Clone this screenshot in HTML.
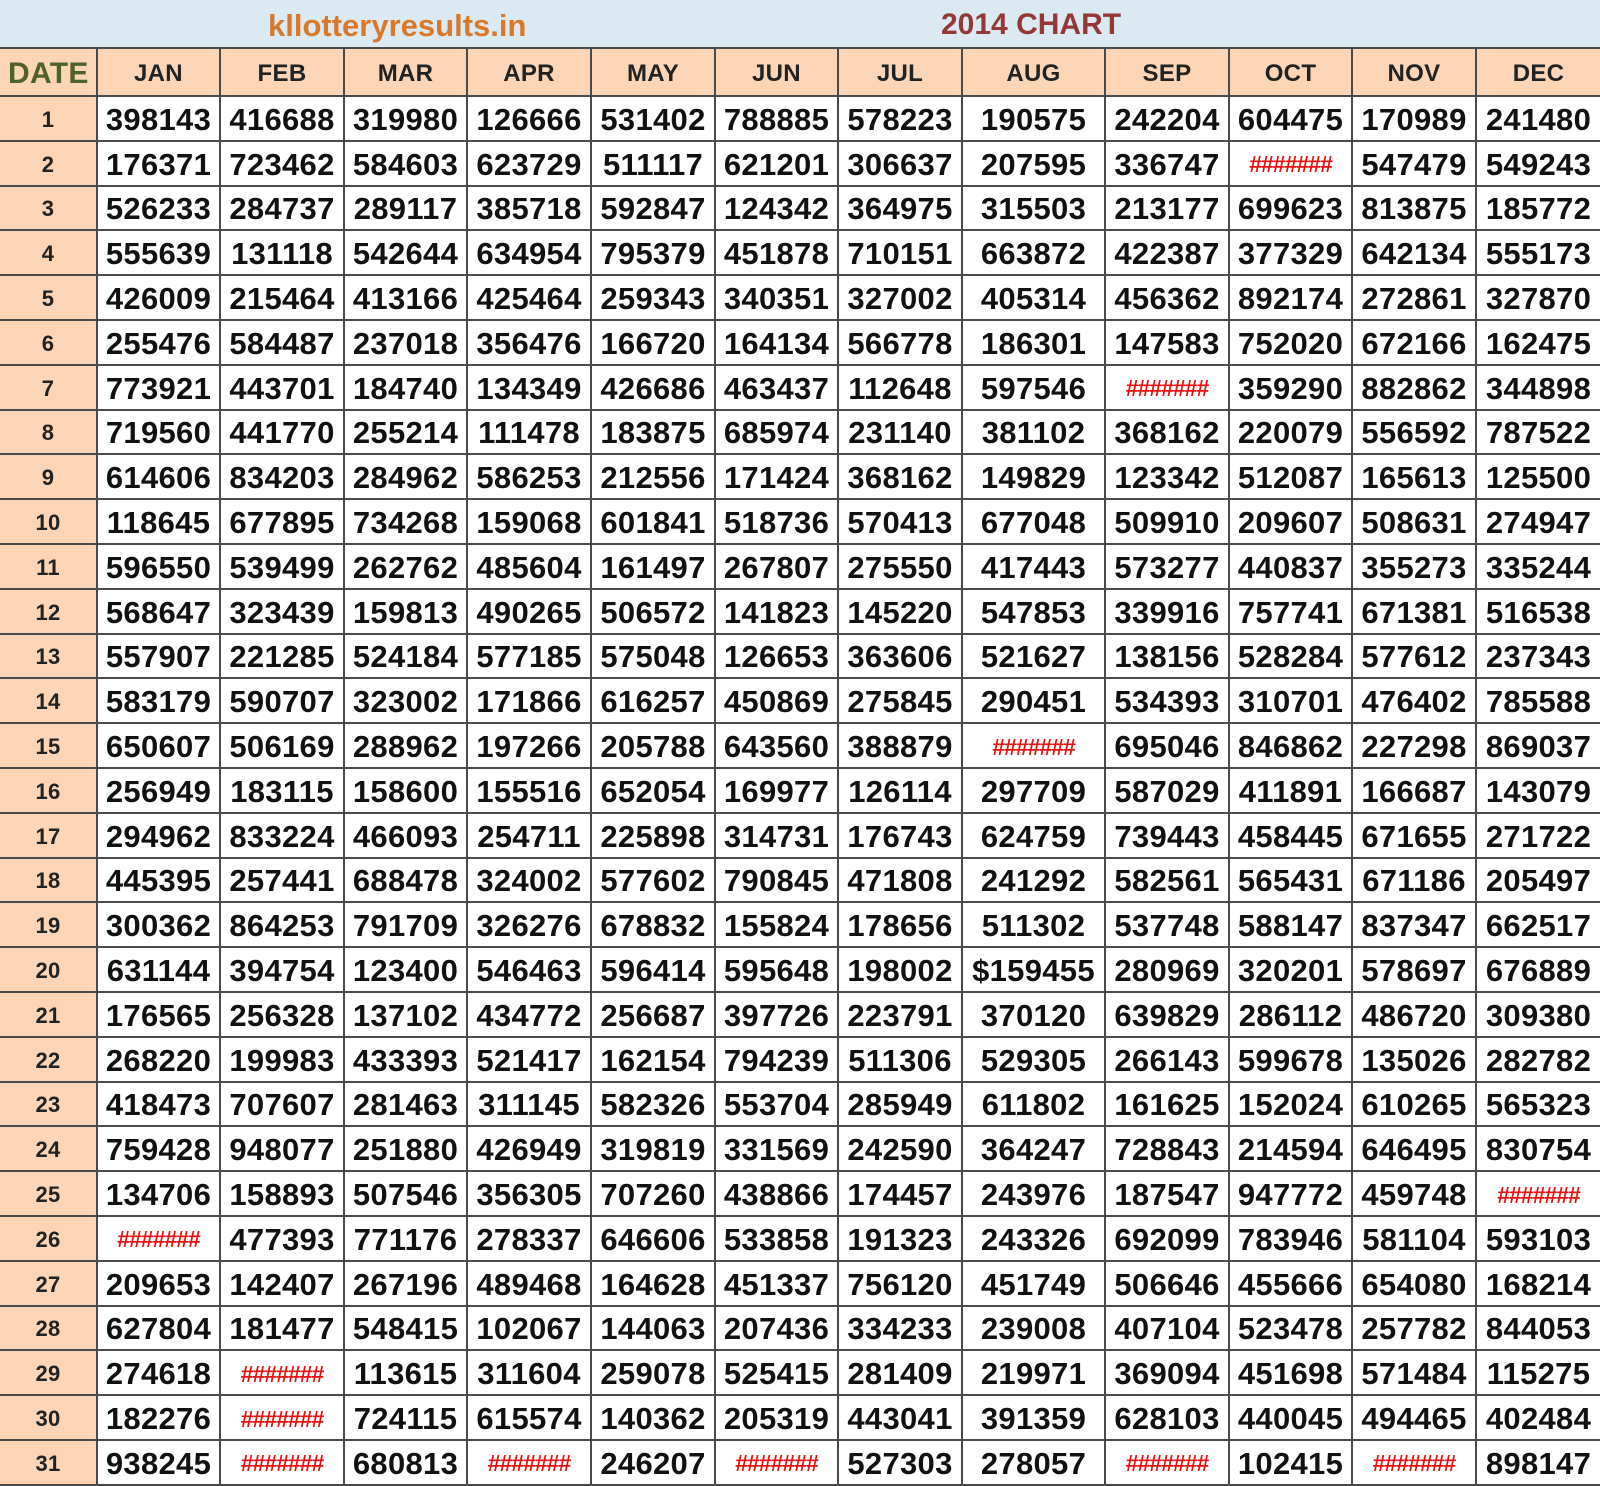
<!DOCTYPE html>
<html><head><meta charset="utf-8"><style>
body{margin:0;width:1600px;height:1486px;overflow:hidden;background:#fff;font-family:"Liberation Sans",Arial,sans-serif}
.top{position:absolute;left:0;top:0;width:1600px;height:47px;background:#dbeaf2;}
.t1{position:absolute;left:268px;top:8px;font-size:31px;font-weight:bold;color:#d9782b;}
.t2{position:absolute;left:941px;top:8px;font-size:30px;font-weight:bold;color:#953735;}
table{position:absolute;left:0;top:47px;border-collapse:collapse;table-layout:fixed;width:1600px;height:1439px}
td{border:2px solid #4a4a4a;padding:0;text-align:center;font-weight:bold;font-size:31px;color:#111;overflow:hidden;white-space:nowrap;letter-spacing:0.3px;padding-top:3px}
tr{height:44.8px}
tr.h{height:48px}
tr.h td{background:#fbd5b5;font-size:24px;color:#222}
tr.h td.d{color:#4f6228;font-size:30px;text-align:left;padding-left:8px}
td.n{background:#fbd5b5;font-size:22px;color:#222}
td.x{color:#e81010;font-size:23px;letter-spacing:-1px}
td:first-child{border-left:none}
td:last-child{border-right:none}
</style></head><body>
<div class="top"><div class="t1">kllotteryresults.in</div><div class="t2">2014 CHART</div></div>
<table>
<colgroup><col style="width:97px"><col style="width:123px"><col style="width:124px"><col style="width:123px"><col style="width:124px"><col style="width:124px"><col style="width:123px"><col style="width:124px"><col style="width:143px"><col style="width:124px"><col style="width:123px"><col style="width:124px"><col style="width:124px"></colgroup>
<tr class="h"><td class="d">DATE</td><td>JAN</td><td>FEB</td><td>MAR</td><td>APR</td><td>MAY</td><td>JUN</td><td>JUL</td><td>AUG</td><td>SEP</td><td>OCT</td><td>NOV</td><td>DEC</td></tr>
<tr><td class="n">1</td><td>398143</td><td>416688</td><td>319980</td><td>126666</td><td>531402</td><td>788885</td><td>578223</td><td>190575</td><td>242204</td><td>604475</td><td>170989</td><td>241480</td></tr>
<tr><td class="n">2</td><td>176371</td><td>723462</td><td>584603</td><td>623729</td><td>511117</td><td>621201</td><td>306637</td><td>207595</td><td>336747</td><td class="x">#######</td><td>547479</td><td>549243</td></tr>
<tr><td class="n">3</td><td>526233</td><td>284737</td><td>289117</td><td>385718</td><td>592847</td><td>124342</td><td>364975</td><td>315503</td><td>213177</td><td>699623</td><td>813875</td><td>185772</td></tr>
<tr><td class="n">4</td><td>555639</td><td>131118</td><td>542644</td><td>634954</td><td>795379</td><td>451878</td><td>710151</td><td>663872</td><td>422387</td><td>377329</td><td>642134</td><td>555173</td></tr>
<tr><td class="n">5</td><td>426009</td><td>215464</td><td>413166</td><td>425464</td><td>259343</td><td>340351</td><td>327002</td><td>405314</td><td>456362</td><td>892174</td><td>272861</td><td>327870</td></tr>
<tr><td class="n">6</td><td>255476</td><td>584487</td><td>237018</td><td>356476</td><td>166720</td><td>164134</td><td>566778</td><td>186301</td><td>147583</td><td>752020</td><td>672166</td><td>162475</td></tr>
<tr><td class="n">7</td><td>773921</td><td>443701</td><td>184740</td><td>134349</td><td>426686</td><td>463437</td><td>112648</td><td>597546</td><td class="x">#######</td><td>359290</td><td>882862</td><td>344898</td></tr>
<tr><td class="n">8</td><td>719560</td><td>441770</td><td>255214</td><td>111478</td><td>183875</td><td>685974</td><td>231140</td><td>381102</td><td>368162</td><td>220079</td><td>556592</td><td>787522</td></tr>
<tr><td class="n">9</td><td>614606</td><td>834203</td><td>284962</td><td>586253</td><td>212556</td><td>171424</td><td>368162</td><td>149829</td><td>123342</td><td>512087</td><td>165613</td><td>125500</td></tr>
<tr><td class="n">10</td><td>118645</td><td>677895</td><td>734268</td><td>159068</td><td>601841</td><td>518736</td><td>570413</td><td>677048</td><td>509910</td><td>209607</td><td>508631</td><td>274947</td></tr>
<tr><td class="n">11</td><td>596550</td><td>539499</td><td>262762</td><td>485604</td><td>161497</td><td>267807</td><td>275550</td><td>417443</td><td>573277</td><td>440837</td><td>355273</td><td>335244</td></tr>
<tr><td class="n">12</td><td>568647</td><td>323439</td><td>159813</td><td>490265</td><td>506572</td><td>141823</td><td>145220</td><td>547853</td><td>339916</td><td>757741</td><td>671381</td><td>516538</td></tr>
<tr><td class="n">13</td><td>557907</td><td>221285</td><td>524184</td><td>577185</td><td>575048</td><td>126653</td><td>363606</td><td>521627</td><td>138156</td><td>528284</td><td>577612</td><td>237343</td></tr>
<tr><td class="n">14</td><td>583179</td><td>590707</td><td>323002</td><td>171866</td><td>616257</td><td>450869</td><td>275845</td><td>290451</td><td>534393</td><td>310701</td><td>476402</td><td>785588</td></tr>
<tr><td class="n">15</td><td>650607</td><td>506169</td><td>288962</td><td>197266</td><td>205788</td><td>643560</td><td>388879</td><td class="x">#######</td><td>695046</td><td>846862</td><td>227298</td><td>869037</td></tr>
<tr><td class="n">16</td><td>256949</td><td>183115</td><td>158600</td><td>155516</td><td>652054</td><td>169977</td><td>126114</td><td>297709</td><td>587029</td><td>411891</td><td>166687</td><td>143079</td></tr>
<tr><td class="n">17</td><td>294962</td><td>833224</td><td>466093</td><td>254711</td><td>225898</td><td>314731</td><td>176743</td><td>624759</td><td>739443</td><td>458445</td><td>671655</td><td>271722</td></tr>
<tr><td class="n">18</td><td>445395</td><td>257441</td><td>688478</td><td>324002</td><td>577602</td><td>790845</td><td>471808</td><td>241292</td><td>582561</td><td>565431</td><td>671186</td><td>205497</td></tr>
<tr><td class="n">19</td><td>300362</td><td>864253</td><td>791709</td><td>326276</td><td>678832</td><td>155824</td><td>178656</td><td>511302</td><td>537748</td><td>588147</td><td>837347</td><td>662517</td></tr>
<tr><td class="n">20</td><td>631144</td><td>394754</td><td>123400</td><td>546463</td><td>596414</td><td>595648</td><td>198002</td><td>$159455</td><td>280969</td><td>320201</td><td>578697</td><td>676889</td></tr>
<tr><td class="n">21</td><td>176565</td><td>256328</td><td>137102</td><td>434772</td><td>256687</td><td>397726</td><td>223791</td><td>370120</td><td>639829</td><td>286112</td><td>486720</td><td>309380</td></tr>
<tr><td class="n">22</td><td>268220</td><td>199983</td><td>433393</td><td>521417</td><td>162154</td><td>794239</td><td>511306</td><td>529305</td><td>266143</td><td>599678</td><td>135026</td><td>282782</td></tr>
<tr><td class="n">23</td><td>418473</td><td>707607</td><td>281463</td><td>311145</td><td>582326</td><td>553704</td><td>285949</td><td>611802</td><td>161625</td><td>152024</td><td>610265</td><td>565323</td></tr>
<tr><td class="n">24</td><td>759428</td><td>948077</td><td>251880</td><td>426949</td><td>319819</td><td>331569</td><td>242590</td><td>364247</td><td>728843</td><td>214594</td><td>646495</td><td>830754</td></tr>
<tr><td class="n">25</td><td>134706</td><td>158893</td><td>507546</td><td>356305</td><td>707260</td><td>438866</td><td>174457</td><td>243976</td><td>187547</td><td>947772</td><td>459748</td><td class="x">#######</td></tr>
<tr><td class="n">26</td><td class="x">#######</td><td>477393</td><td>771176</td><td>278337</td><td>646606</td><td>533858</td><td>191323</td><td>243326</td><td>692099</td><td>783946</td><td>581104</td><td>593103</td></tr>
<tr><td class="n">27</td><td>209653</td><td>142407</td><td>267196</td><td>489468</td><td>164628</td><td>451337</td><td>756120</td><td>451749</td><td>506646</td><td>455666</td><td>654080</td><td>168214</td></tr>
<tr><td class="n">28</td><td>627804</td><td>181477</td><td>548415</td><td>102067</td><td>144063</td><td>207436</td><td>334233</td><td>239008</td><td>407104</td><td>523478</td><td>257782</td><td>844053</td></tr>
<tr><td class="n">29</td><td>274618</td><td class="x">#######</td><td>113615</td><td>311604</td><td>259078</td><td>525415</td><td>281409</td><td>219971</td><td>369094</td><td>451698</td><td>571484</td><td>115275</td></tr>
<tr><td class="n">30</td><td>182276</td><td class="x">#######</td><td>724115</td><td>615574</td><td>140362</td><td>205319</td><td>443041</td><td>391359</td><td>628103</td><td>440045</td><td>494465</td><td>402484</td></tr>
<tr><td class="n">31</td><td>938245</td><td class="x">#######</td><td>680813</td><td class="x">#######</td><td>246207</td><td class="x">#######</td><td>527303</td><td>278057</td><td class="x">#######</td><td>102415</td><td class="x">#######</td><td>898147</td></tr>
</table>
</body></html>
